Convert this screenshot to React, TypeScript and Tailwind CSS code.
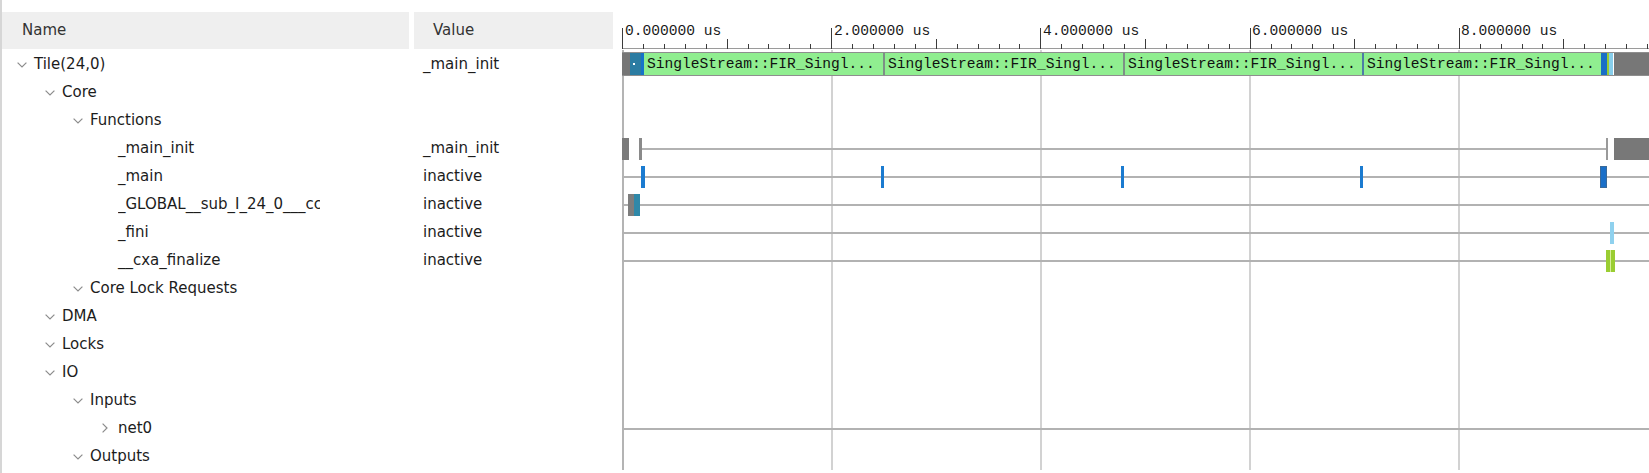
import React from 'react'

type TreeRow = {
  name: string
  level: number
  chevron?: 'down' | 'right'
  value?: string
}

const rows: TreeRow[] = [
  { name: 'Tile(24,0)', level: 0, chevron: 'down', value: '_main_init' },
  { name: 'Core', level: 1, chevron: 'down' },
  { name: 'Functions', level: 2, chevron: 'down' },
  { name: '_main_init', level: 3, value: '_main_init' },
  { name: '_main', level: 3, value: 'inactive' },
  { name: '_GLOBAL__sub_I_24_0___cc', level: 3, value: 'inactive' },
  { name: '_fini', level: 3, value: 'inactive' },
  { name: '__cxa_finalize', level: 3, value: 'inactive' },
  { name: 'Core Lock Requests', level: 2, chevron: 'down' },
  { name: 'DMA', level: 1, chevron: 'down' },
  { name: 'Locks', level: 1, chevron: 'down' },
  { name: 'IO', level: 1, chevron: 'down' },
  { name: 'Inputs', level: 2, chevron: 'down' },
  { name: 'net0', level: 3, chevron: 'right' },
  { name: 'Outputs', level: 2, chevron: 'down' },
]

const indent = ['pl-[15px]', 'pl-[43px]', 'pl-[71px]', 'pl-[99px]']

// one minor tick every 0.2 us
const TICK = 20.92

// marks drawn on each waveform row: [left, width, colour class]
type Mark = { x: number; w: number; cls: string }
type WaveRow = { line?: boolean; lineFrom?: number; lineTo?: number; marks?: Mark[] }

const waveRows: WaveRow[] = [
  {}, // bar row, drawn separately
  {},
  {},
  {
    line: true,
    lineFrom: 20,
    lineTo: 985,
    marks: [
      { x: 0, w: 7, cls: 'bg-[#7a7a7a]' },
      { x: 17, w: 3, cls: 'bg-[#8a8a8a]' },
      { x: 984, w: 2, cls: 'bg-[#9a9a9a]' },
      { x: 992, w: 35, cls: 'bg-[#787878]' },
    ],
  },
  {
    line: true,
    marks: [
      { x: 19, w: 4, cls: 'bg-[#1b7bd0]' },
      { x: 259, w: 3, cls: 'bg-[#1b7bd0]' },
      { x: 499, w: 3, cls: 'bg-[#1b7bd0]' },
      { x: 738, w: 3, cls: 'bg-[#1b7bd0]' },
      { x: 978, w: 7, cls: 'bg-[#1a6fc8] border border-[#3a6a9a]' },
    ],
  },
  {
    line: true,
    marks: [
      { x: 6, w: 6, cls: 'bg-[#7d7d7d]' },
      { x: 12, w: 6, cls: 'bg-[#2f88a8]' },
    ],
  },
  { line: true, marks: [{ x: 988, w: 4, cls: 'bg-[#8fd1ee]' }] },
  {
    line: true,
    marks: [
      { x: 984, w: 4, cls: 'bg-[#9acd32]' },
      { x: 988, w: 1, cls: 'bg-[#d6ef9a]' },
      { x: 989, w: 4, cls: 'bg-[#9acd32]' },
    ],
  },
  {},
  {},
  {},
  {},
  {},
  { line: true },
  {},
]

function ChevronDown() {
  return (
    <svg width="10" height="6" viewBox="0 0 10 6" className="mt-[2px]">
      <polyline points="0.6,0.6 5,5 9.4,0.6" fill="none" stroke="#8c8c8c" strokeWidth="1.2" />
    </svg>
  )
}

function ChevronRight() {
  return (
    <svg width="6" height="10" viewBox="0 0 6 10" className="ml-[1px]">
      <polyline points="0.6,0.6 5,5 0.6,9.4" fill="none" stroke="#8c8c8c" strokeWidth="1.2" />
    </svg>
  )
}

function Ruler() {
  const ticks = Array.from({ length: 50 }, (_, i) => i)
  return (
    <div className="relative h-[37px] mt-[12px]">
      <svg width="1027" height="37" className="absolute left-0 top-0">
        <line x1="0" y1="36.5" x2="1027" y2="36.5" stroke="#9a9a9a" strokeWidth="1" />
        {ticks.map((i) => {
          const x = Math.round(i * TICK) + 0.5
          const top = i % 10 === 0 ? 16 : i % 5 === 0 ? 27 : 32
          return <line key={i} x1={x} y1={top} x2={x} y2="37" stroke="#3c3c3c" strokeWidth="1" />
        })}
      </svg>
      {[0, 2, 4, 6, 8].map((us, k) => (
        <span
          key={us}
          className={`absolute top-[10px] leading-[18px] text-[14.6px] text-[#1a1a1a] font-['Liberation_Mono','DejaVu_Sans_Mono',monospace] whitespace-nowrap ${
            ['left-[3px]', 'left-[212px]', 'left-[421px]', 'left-[630px]', 'left-[839px]'][k]
          }`}
        >
          {us}.000000 us
        </span>
      ))}
    </div>
  )
}

function GreenSeg({ w }: { w: string }) {
  return (
    <div className={`${w} h-full bg-[#90ee90] pl-[3px] overflow-hidden whitespace-nowrap leading-[22px] text-[14.6px] text-[#111] font-['Liberation_Mono','DejaVu_Sans_Mono',monospace]`}>
      SingleStream::FIR_Singl...
    </div>
  )
}

function BarRow() {
  return (
    <div className="relative h-[28px]">
      <div className="absolute left-0 right-0 top-[2px] h-[24px] flex border-y border-[#8e8e8e] bg-white">
        <div className="w-[8px] bg-[#767676]" />
        <div className="w-[11px] bg-[#2b7ca2] flex items-center">
          <div className="ml-[3px] w-[2px] h-[2px] bg-white" />
        </div>
        <div className="w-[3px] bg-[#1673c8]" />
        <GreenSeg w="w-[239px]" />
        <div className="w-[2px] bg-[#7d8f86]" />
        <GreenSeg w="w-[238px]" />
        <div className="w-[2px] bg-[#7d8f86]" />
        <GreenSeg w="w-[237px]" />
        <div className="w-[2px] bg-[#4c7ca6]" />
        <GreenSeg w="w-[237px]" />
        <div className="w-[6px] bg-[#1a6fc6]" />
        <div className="w-[2px] bg-[#9acd32]" />
        <div className="w-[4px] bg-[#87ceeb]" />
        <div className="w-[1px] bg-white" />
        <div className="flex-1 bg-[#777]" />
      </div>
    </div>
  )
}

function Waveform() {
  return (
    <div className="w-[1027px] flex flex-col">
      <Ruler />
      <div className="relative mt-[1px] flex-1">
        {/* grid */}
        <div className="absolute left-0 top-0 bottom-0 w-[2px] bg-[#b4b4b4]" />
        {['left-[209px]', 'left-[418px]', 'left-[627px]', 'left-[836px]'].map((l) => (
          <div key={l} className={`absolute ${l} top-0 bottom-0 w-[2px] bg-[#d2d2d2]`} />
        ))}
        <BarRow />
        {waveRows.slice(1).map((r, i) => (
          <div key={i} className="relative h-[28px]">
            {r.line && (
              <div
                className="absolute top-[14px] h-[2px] bg-[#b2b2b2]"
                style={{ left: r.lineFrom ?? 0, width: (r.lineTo ?? 1027) - (r.lineFrom ?? 0) }}
              />
            )}
            {r.marks?.map((m, j) => (
              <div
                key={j}
                className={`absolute top-[4px] h-[22px] ${m.cls}`}
                style={{ left: m.x, width: m.w }}
              />
            ))}
          </div>
        ))}
      </div>
    </div>
  )
}

export default function App() {
  return (
    <div className="w-[1649px] h-[473px] overflow-hidden bg-white flex text-[15px] text-[#1c1c1c] font-['DejaVu_Sans','Noto_Sans',sans-serif]">
      {/* Name column */}
      <div className="w-[409px] border-l-2 border-[#d6d6d6] flex flex-col">
        <div className="mt-[12px] h-[37px] bg-[#efefef] pl-[20px] flex items-center text-[#333]">Name</div>
        <div className="mt-[1px]">
          {rows.map((r) => (
            <div key={r.name} className={`h-[28px] flex items-center whitespace-nowrap ${indent[r.level]}`}>
              <div className="w-[17px] flex items-center">
                {r.chevron === 'down' && <ChevronDown />}
                {r.chevron === 'right' && <ChevronRight />}
              </div>
              <span className={r.name.startsWith('_GLOBAL') ? 'w-[202px] overflow-hidden' : ''}>{r.name}</span>
            </div>
          ))}
        </div>
      </div>

      {/* Value column */}
      <div className="w-[199px] ml-[5px] flex flex-col">
        <div className="mt-[12px] h-[37px] bg-[#efefef] pl-[19px] flex items-center text-[#333]">Value</div>
        <div className="mt-[1px]">
          {rows.map((r) => (
            <div key={r.name} className="h-[28px] flex items-center pl-[9px] whitespace-nowrap">
              {r.value ?? ''}
            </div>
          ))}
        </div>
      </div>

      <div className="ml-[9px]">
        <Waveform />
      </div>
    </div>
  )
}
